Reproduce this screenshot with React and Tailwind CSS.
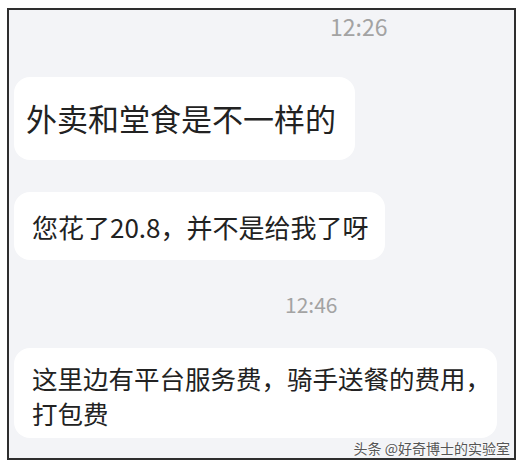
export default function App() {
  return (
    <div className="w-[525px] h-[469px] bg-white pt-[8px] pl-[7px] pr-[9px] pb-[9px] font-['Noto_Sans_CJK_SC','Noto_Sans',sans-serif]">
      <div className="relative h-full border-2 border-[#2e2e2e] bg-[#f3f4f7] flex flex-col items-start">
        <div className="ml-[321px] h-[32px] leading-[32px] text-[23px] text-[#a3a3a3]">12:26</div>

        <div className="mt-[35px] ml-[5px] w-[341px] h-[83px] rounded-[16px] bg-white pl-[12px] flex items-center text-[31px] text-[#222]">
          外卖和堂食是不一样的
        </div>

        <div className="mt-[32px] ml-[5px] w-[371px] h-[68px] rounded-[16px] bg-white pl-[18px] flex items-center text-[26px] text-[#222]">
          您花了20.8，并不是给我了呀
        </div>

        <div className="mt-[30px] ml-[276px] h-[28px] leading-[28px] text-[21px] text-[#a3a3a3]">12:46</div>

        <div className="mt-[30px] ml-[5px] w-[483px] h-[90px] rounded-[16px] bg-white pl-[18px] pt-[12px] text-[25.5px] leading-[35px] text-[#222] whitespace-nowrap">
          这里边有平台服务费，骑手送餐的费用，
          <br />
          打包费
        </div>

        <div className="absolute right-[4px] bottom-[0px] text-[14px] leading-[20px] text-[#555] [text-shadow:0_0_2px_#fff,0_0_2px_#fff]">
          头条 @好奇博士的实验室
        </div>
      </div>
    </div>
  );
}
